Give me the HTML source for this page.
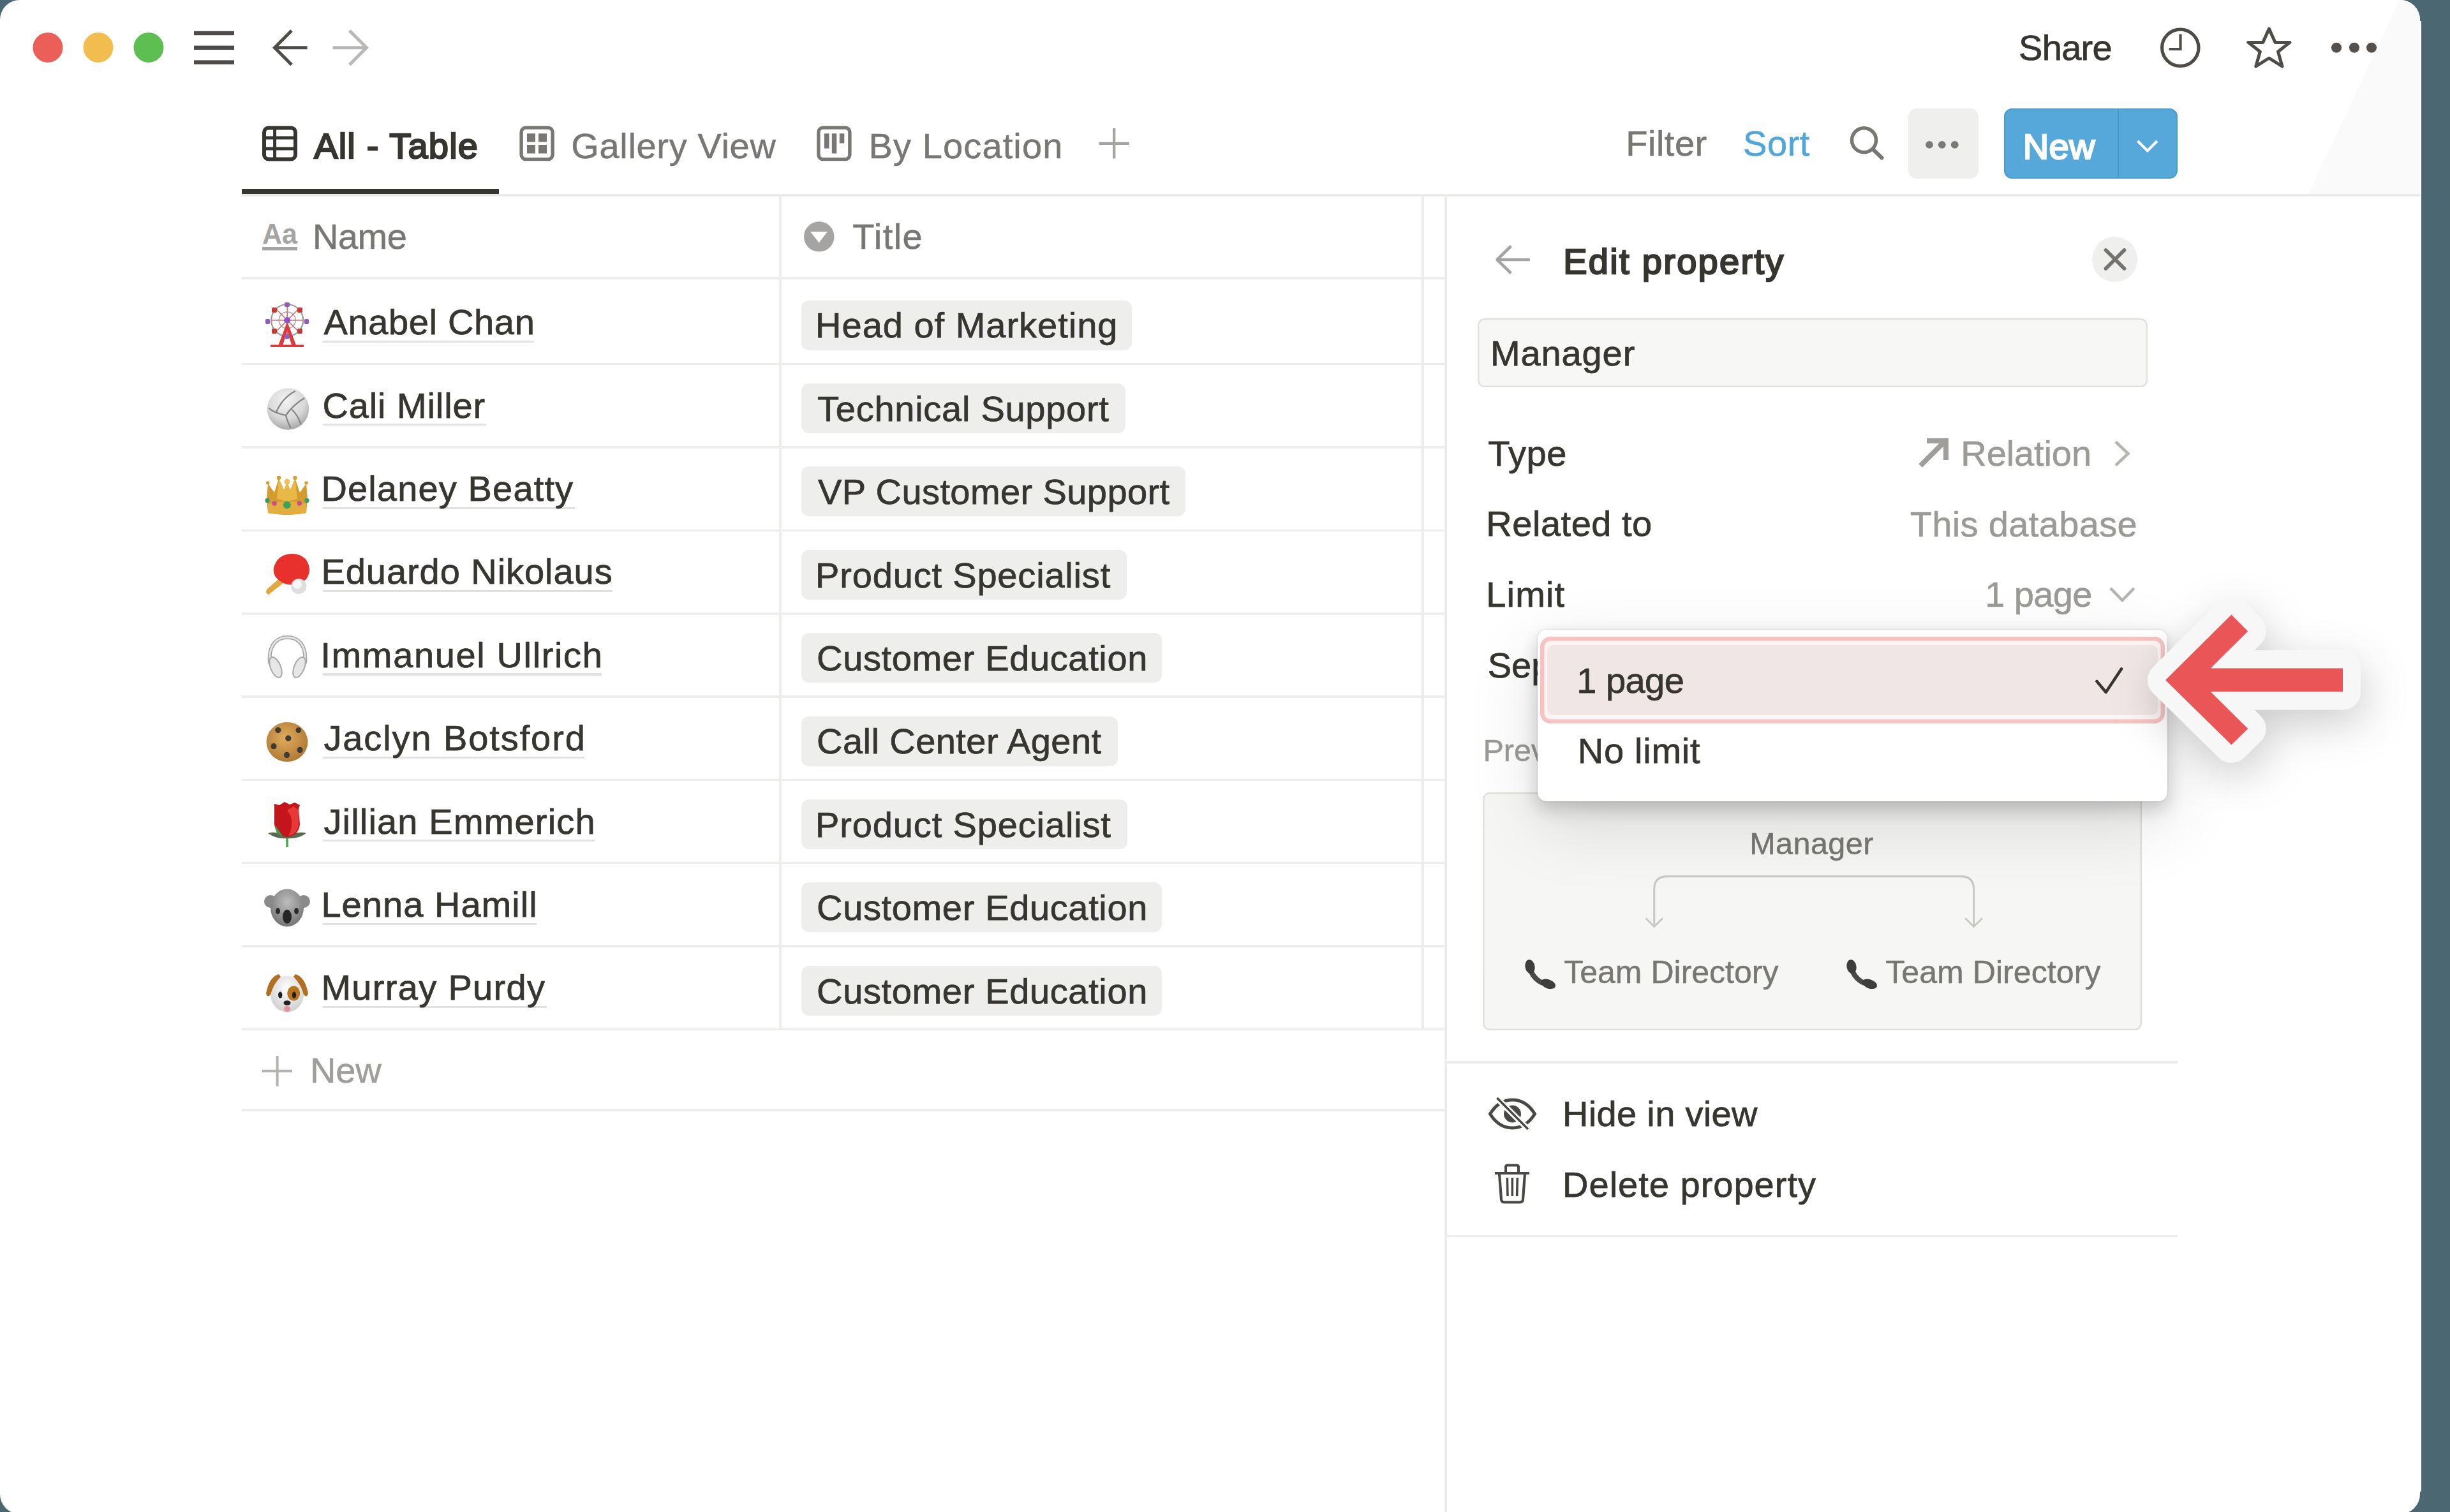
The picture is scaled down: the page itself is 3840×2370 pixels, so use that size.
<!DOCTYPE html>
<html><head><meta charset="utf-8"><style>
html,body{margin:0;padding:0;width:3840px;height:2370px;overflow:hidden;background:#4b6771;}
.win{position:absolute;left:0;top:0;width:3793px;height:2373px;border-radius:31px;background:#fff;overflow:hidden;}
.t{position:absolute;font-family:"Liberation Sans", sans-serif;line-height:1;white-space:pre;}
.r{position:absolute;}
.ov{position:absolute;left:0;top:0;overflow:visible;}
.wrap{position:absolute;left:0;top:0;width:3840px;height:2370px;}
</style></head><body>
<div class="r" style="left:3792.5px;top:33px;width:2.3px;height:2305px;background:#fff"></div><div class="win"><div class="wrap">
<svg class="ov" width="3840" height="400"><path d="M3761 0 H3800 V305 H3618 Z" fill="#fafafa"/></svg><div class="r" style="left:379.0px;top:296.0px;width:403.0px;height:8.0px;background:#37352f;"></div><div class="r" style="left:378.0px;top:304.2px;width:3422.0px;height:3.4px;background:#ebebea;"></div><div class="r" style="left:379.0px;top:434.3px;width:1887.0px;height:3.5px;background:#ededec;"></div><div class="r" style="left:379.0px;top:568.9px;width:1887.0px;height:3.5px;background:#ededec;"></div><div class="r" style="left:379.0px;top:699.2px;width:1887.0px;height:3.5px;background:#ededec;"></div><div class="r" style="left:379.0px;top:829.6px;width:1887.0px;height:3.5px;background:#ededec;"></div><div class="r" style="left:379.0px;top:960.2px;width:1887.0px;height:3.5px;background:#ededec;"></div><div class="r" style="left:379.0px;top:1090.2px;width:1887.0px;height:3.5px;background:#ededec;"></div><div class="r" style="left:379.0px;top:1220.8px;width:1887.0px;height:3.5px;background:#ededec;"></div><div class="r" style="left:379.0px;top:1350.8px;width:1887.0px;height:3.5px;background:#ededec;"></div><div class="r" style="left:379.0px;top:1481.2px;width:1887.0px;height:3.5px;background:#ededec;"></div><div class="r" style="left:379.0px;top:1611.8px;width:1887.0px;height:3.5px;background:#ededec;"></div><div class="r" style="left:379.0px;top:1738.2px;width:1887.0px;height:3.5px;background:#ededec;"></div><div class="r" style="left:1221.0px;top:307.0px;width:3.5px;height:1306.6px;background:#ededec;"></div><div class="r" style="left:2228.2px;top:307.0px;width:3.5px;height:1306.6px;background:#ededec;"></div><div class="r" style="left:2264.0px;top:307.0px;width:3.6px;height:2093.0px;background:#ededec;"></div><div class="r" style="left:2268.0px;top:1663.4px;width:1145.0px;height:3.2px;background:#ededec;"></div><div class="r" style="left:2268.0px;top:1935.6px;width:1145.0px;height:3.2px;background:#ededec;"></div><div class="r" style="left:506.0px;top:533.7px;width:331.3px;height:3.4px;background:#e3e2e0;"></div><div class="r" style="left:506.0px;top:664.1px;width:256.2px;height:3.4px;background:#e3e2e0;"></div><div class="r" style="left:506.0px;top:794.5px;width:394.8px;height:3.4px;background:#e3e2e0;"></div><div class="r" style="left:506.0px;top:924.9px;width:454.3px;height:3.4px;background:#e3e2e0;"></div><div class="r" style="left:506.0px;top:1055.3px;width:437.3px;height:3.4px;background:#e3e2e0;"></div><div class="r" style="left:506.0px;top:1185.7px;width:410.3px;height:3.4px;background:#e3e2e0;"></div><div class="r" style="left:506.0px;top:1316.1px;width:426.1px;height:3.4px;background:#e3e2e0;"></div><div class="r" style="left:506.0px;top:1446.5px;width:334.9px;height:3.4px;background:#e3e2e0;"></div><div class="r" style="left:506.0px;top:1576.9px;width:350.7px;height:3.4px;background:#e3e2e0;"></div><div class="r" style="left:1256.0px;top:470.5px;width:518.0px;height:78.2px;background:#eeeeed;border-radius:12px"></div><div class="r" style="left:1256.0px;top:600.9px;width:508.1px;height:78.2px;background:#eeeeed;border-radius:12px"></div><div class="r" style="left:1256.0px;top:731.3px;width:602.3px;height:78.2px;background:#eeeeed;border-radius:12px"></div><div class="r" style="left:1256.0px;top:861.7px;width:510.3px;height:78.2px;background:#eeeeed;border-radius:12px"></div><div class="r" style="left:1256.0px;top:992.1px;width:564.8px;height:78.2px;background:#eeeeed;border-radius:12px"></div><div class="r" style="left:1256.0px;top:1122.5px;width:496.2px;height:78.2px;background:#eeeeed;border-radius:12px"></div><div class="r" style="left:1256.0px;top:1252.9px;width:511.0px;height:78.2px;background:#eeeeed;border-radius:12px"></div><div class="r" style="left:1256.0px;top:1383.3px;width:564.8px;height:78.2px;background:#eeeeed;border-radius:12px"></div><div class="r" style="left:1256.0px;top:1513.7px;width:564.8px;height:78.2px;background:#eeeeed;border-radius:12px"></div><div class="r" style="left:2990.8px;top:169.9px;width:109.9px;height:110.1px;background:#efefee;border-radius:13px"></div><div class="r" style="left:3141.0px;top:170.0px;width:271.8px;height:110.0px;background:#55a8d9;border-radius:13px;box-shadow:inset 0 0 0 2px #4b9cce"></div><div class="r" style="left:3318.8px;top:170.0px;width:2.4px;height:110.0px;background:#4a97c6;"></div><div class="r" style="left:2316.0px;top:498.6px;width:1049.6px;height:108.9px;background:#f7f7f5;border-radius:11px;box-shadow:inset 0 0 0 2.5px #e2e1de"></div><div class="r" style="left:3279.2px;top:371.4px;width:70.6px;height:70.6px;background:#efefee;border-radius:50%"></div><div class="r" style="left:2324.0px;top:1242.0px;width:1033.0px;height:372.5px;background:#f6f6f4;border-radius:11px;box-shadow:inset 0 0 0 2.5px #e2e1de"></div>
<svg class="ov" width="3840" height="2370" viewBox="0 0 3840 2370"><circle cx="75" cy="74.5" r="23.5" fill="#ec5f59"/><circle cx="154" cy="74.5" r="23.5" fill="#f2bd4e"/><circle cx="233" cy="74.5" r="23.5" fill="#5dbf52"/><rect x="304" y="48.8" width="63" height="6.4" fill="#4f4b47"/><rect x="304" y="71.6" width="63" height="6.4" fill="#4f4b47"/><rect x="304" y="94.39999999999999" width="63" height="6.4" fill="#4f4b47"/><path d="M481.6 74.7 H430 M457 48 L430.5 74.7 L457 101.4" stroke="#4f4b47" stroke-width="5" fill="none"/><path d="M521.6 74.7 H573 M547.8 48 L574.5 74.7 L547.8 101.4" stroke="#b9b8b6" stroke-width="5" fill="none"/><circle cx="3417.3" cy="74.8" r="28.7" stroke="#4f4b47" stroke-width="5.2" fill="none"/><path d="M3417.5 53.4 V77 H3399.7" stroke="#4f4b47" stroke-width="4.2" fill="none"/><path d="M3556.4 45 L3566 66.4 L3589 66.4 L3570.5 81 L3577 104 L3556.4 91 L3535.8 104 L3542.3 81 L3523.8 66.4 L3546.8 66.4 Z" stroke="#4f4b47" stroke-width="5" fill="none" stroke-linejoin="round"/><circle cx="3662" cy="74.7" r="8" fill="#55504b"/><circle cx="3690" cy="74.7" r="8" fill="#55504b"/><circle cx="3717" cy="74.7" r="8" fill="#55504b"/><rect x="414" y="200.4" width="49" height="49" rx="7" stroke="#37352f" stroke-width="6" fill="none"/><path d="M414 216 H463 M414 233 H463 M430.6 200.4 V249.4" stroke="#37352f" stroke-width="5" fill="none"/><rect x="817.1" y="200.1" width="49" height="49.5" rx="7" stroke="#787774" stroke-width="5.4" fill="none"/><rect x="826" y="209.3" width="13" height="13.3" fill="#787774"/><rect x="844" y="209.3" width="13" height="13.3" fill="#787774"/><rect x="826" y="227" width="13" height="13.5" fill="#787774"/><rect x="844" y="227" width="13" height="13.5" fill="#787774"/><rect x="1282.9" y="200.1" width="49" height="49.5" rx="7" stroke="#787774" stroke-width="5.4" fill="none"/><rect x="1292" y="209.3" width="7.6" height="23.3" fill="#787774"/><rect x="1303.8" y="209.3" width="7.5" height="31.2" fill="#787774"/><rect x="1315.8" y="209.3" width="7.5" height="15.2" fill="#787774"/><path d="M1746.2 201 V248.5 M1722.5 224.8 H1769.8" stroke="#a5a4a1" stroke-width="4.3" fill="none"/><circle cx="2921.5" cy="219.7" r="19" stroke="#787774" stroke-width="5.5" fill="none"/><path d="M2935 233.5 L2949.5 247.5" stroke="#787774" stroke-width="6" stroke-linecap="round"/><circle cx="3024" cy="226.8" r="5.9" fill="#7b7a77"/><circle cx="3043.8" cy="226.8" r="5.9" fill="#7b7a77"/><circle cx="3063.7" cy="226.8" r="5.9" fill="#7b7a77"/><path d="M3350.5 221 L3365.8 236.3 L3381 221" stroke="#fff" stroke-width="4.2" fill="none"/><text x="411" y="382.4" font-family="Liberation Sans" font-weight="700" font-size="45" fill="#a5a4a2" textLength="55" lengthAdjust="spacingAndGlyphs">Aa</text><rect x="411" y="387" width="55" height="5.4" fill="#a5a4a2"/><circle cx="1283.8" cy="370.9" r="23.7" fill="#a5a4a2"/><path d="M1270.4 363.3 H1296.8 L1283.6 380.4 Z" fill="#fff"/><path d="M434.6 1655 V1702.5 M411 1678.8 H458" stroke="#b4b3b0" stroke-width="4" fill="none"/><path d="M2396 407 H2348 M2367 387 L2346.5 407 L2367 427" stroke="#a5a4a2" stroke-width="4.6" fill="none" stroke-linecap="round" stroke-linejoin="round"/><path d="M3300.5 392 L3329.5 421 M3329.5 392 L3300.5 421" stroke="#73726e" stroke-width="5.8" fill="none" stroke-linecap="round"/><path d="M3010 730 L3048 692" stroke="#9f9e9b" stroke-width="8" fill="none"/><path d="M3020 687 H3054 V721 H3046 V695 H3020 Z" fill="#9f9e9b"/><path d="M3316 692.5 L3335.5 711 L3316 729.5" stroke="#b5b4b1" stroke-width="4.5" fill="none"/><path d="M3308 922 L3326.4 941 L3344.8 922" stroke="#b5b4b1" stroke-width="4.5" fill="none"/><path d="M2592.7 1450 V1394 Q2592.7 1373.8 2612.7 1373.8 H3073.6 Q3093.6 1373.8 3093.6 1394 V1450" stroke="#c8c7c4" stroke-width="3" fill="none"/><path d="M2579.4 1439.3 L2592.7 1452.5 L2606 1439.3 M3080.3 1439.3 L3093.6 1452.5 L3106.9 1439.3" stroke="#c8c7c4" stroke-width="3" fill="none"/><path d="M2335.5 1746 C2346 1729 2359 1724 2370.5 1724 C2382 1724 2395 1729 2405.5 1746 C2395 1763 2382 1768 2370.5 1768 C2359 1768 2346 1763 2335.5 1746 Z" stroke="#4a4845" stroke-width="5" fill="none"/><circle cx="2370.5" cy="1746" r="13.5" fill="#4a4845"/><path d="M2343 1718 L2398 1773" stroke="#fff" stroke-width="9"/><path d="M2346.4 1721 L2395 1770" stroke="#4a4845" stroke-width="3.5"/><path d="M2343 1839 H2397" stroke="#4a4845" stroke-width="4.2"/><path d="M2360 1838 V1829 Q2360 1826.5 2363 1826.5 H2377 Q2380 1826.5 2380 1829 V1838" stroke="#4a4845" stroke-width="4" fill="none"/><path d="M2350 1840 L2353 1880 Q2353.5 1884.5 2358 1884.5 H2382 Q2386.5 1884.5 2387 1880 L2390 1840" stroke="#4a4845" stroke-width="4.2" fill="none"/><path d="M2362.3 1846 L2363 1875 M2370.3 1846 V1875 M2378.3 1846 L2377.6 1875" stroke="#4a4845" stroke-width="3.6" fill="none"/></svg>
<div class="t" style="left:3164.1px;top:47.2px;font-size:56px;font-weight:400;color:#37352f;letter-spacing:-0.71px;-webkit-text-stroke:0.75px #37352f;">Share</div><div class="t" style="left:492.2px;top:201.0px;font-size:56px;font-weight:400;color:#37352f;letter-spacing:1.19px;-webkit-text-stroke:2.4px #37352f;">All - Table</div><div class="t" style="left:895.3px;top:201.4px;font-size:56px;font-weight:400;color:#787774;letter-spacing:0.66px;-webkit-text-stroke:0.55px #787774;">Gallery View</div><div class="t" style="left:1361.5px;top:201.2px;font-size:56px;font-weight:400;color:#787774;letter-spacing:1.12px;-webkit-text-stroke:0.55px #787774;">By Location</div><div class="t" style="left:2548.3px;top:197.4px;font-size:56px;font-weight:400;color:#787774;letter-spacing:0.49px;-webkit-text-stroke:0.55px #787774;">Filter</div><div class="t" style="left:2732.0px;top:197.4px;font-size:56px;font-weight:400;color:#4fa6da;letter-spacing:0.54px;-webkit-text-stroke:0.55px #4fa6da;">Sort</div><div class="t" style="left:3170.8px;top:201.5px;font-size:56px;font-weight:400;color:#ffffff;letter-spacing:0.36px;-webkit-text-stroke:2.4px #ffffff;">New</div><div class="t" style="left:490.0px;top:343.2px;font-size:56px;font-weight:400;color:#787774;letter-spacing:-0.49px;-webkit-text-stroke:0.55px #787774;">Name</div><div class="t" style="left:1336.3px;top:343.3px;font-size:56px;font-weight:400;color:#787774;letter-spacing:1.42px;-webkit-text-stroke:0.55px #787774;">Title</div><div class="t" style="left:507.4px;top:477.1px;font-size:56px;font-weight:400;color:#37352f;letter-spacing:0.66px;-webkit-text-stroke:0.75px #37352f;">Anabel Chan</div><div class="t" style="left:1278.1px;top:482.4px;font-size:56px;font-weight:400;color:#37352f;letter-spacing:0.99px;-webkit-text-stroke:0.75px #37352f;">Head of Marketing</div><div class="t" style="left:505.4px;top:607.5px;font-size:56px;font-weight:400;color:#37352f;letter-spacing:0.90px;-webkit-text-stroke:0.75px #37352f;">Cali Miller</div><div class="t" style="left:1281.1px;top:612.8px;font-size:56px;font-weight:400;color:#37352f;letter-spacing:0.73px;-webkit-text-stroke:0.75px #37352f;">Technical Support</div><div class="t" style="left:503.4px;top:737.9px;font-size:56px;font-weight:400;color:#37352f;letter-spacing:1.15px;-webkit-text-stroke:0.75px #37352f;">Delaney Beatty</div><div class="t" style="left:1282.1px;top:743.2px;font-size:56px;font-weight:400;color:#37352f;letter-spacing:0.41px;-webkit-text-stroke:0.75px #37352f;">VP Customer Support</div><div class="t" style="left:503.4px;top:868.3px;font-size:56px;font-weight:400;color:#37352f;letter-spacing:0.95px;-webkit-text-stroke:0.75px #37352f;">Eduardo Nikolaus</div><div class="t" style="left:1278.1px;top:873.6px;font-size:56px;font-weight:400;color:#37352f;letter-spacing:0.82px;-webkit-text-stroke:0.75px #37352f;">Product Specialist</div><div class="t" style="left:502.4px;top:998.7px;font-size:56px;font-weight:400;color:#37352f;letter-spacing:1.63px;-webkit-text-stroke:0.75px #37352f;">Immanuel Ullrich</div><div class="t" style="left:1280.1px;top:1004.0px;font-size:56px;font-weight:400;color:#37352f;letter-spacing:0.64px;-webkit-text-stroke:0.75px #37352f;">Customer Education</div><div class="t" style="left:507.4px;top:1129.1px;font-size:56px;font-weight:400;color:#37352f;letter-spacing:1.90px;-webkit-text-stroke:0.75px #37352f;">Jaclyn Botsford</div><div class="t" style="left:1280.1px;top:1134.4px;font-size:56px;font-weight:400;color:#37352f;letter-spacing:0.44px;-webkit-text-stroke:0.75px #37352f;">Call Center Agent</div><div class="t" style="left:507.4px;top:1259.5px;font-size:56px;font-weight:400;color:#37352f;letter-spacing:1.17px;-webkit-text-stroke:0.75px #37352f;">Jillian Emmerich</div><div class="t" style="left:1278.1px;top:1264.8px;font-size:56px;font-weight:400;color:#37352f;letter-spacing:0.86px;-webkit-text-stroke:0.75px #37352f;">Product Specialist</div><div class="t" style="left:503.4px;top:1389.9px;font-size:56px;font-weight:400;color:#37352f;letter-spacing:1.04px;-webkit-text-stroke:0.75px #37352f;">Lenna Hamill</div><div class="t" style="left:1280.1px;top:1395.2px;font-size:56px;font-weight:400;color:#37352f;letter-spacing:0.64px;-webkit-text-stroke:0.75px #37352f;">Customer Education</div><div class="t" style="left:503.4px;top:1520.3px;font-size:56px;font-weight:400;color:#37352f;letter-spacing:1.32px;-webkit-text-stroke:0.75px #37352f;">Murray Purdy</div><div class="t" style="left:1280.1px;top:1525.6px;font-size:56px;font-weight:400;color:#37352f;letter-spacing:0.64px;-webkit-text-stroke:0.75px #37352f;">Customer Education</div><div class="t" style="left:486.0px;top:1649.8px;font-size:56px;font-weight:400;color:#9f9e9b;letter-spacing:-0.22px;-webkit-text-stroke:0.55px #9f9e9b;">New</div><div class="t" style="left:2450.2px;top:382.4px;font-size:56px;font-weight:400;color:#37352f;letter-spacing:2.30px;-webkit-text-stroke:2.4px #37352f;">Edit property</div><div class="t" style="left:2335.9px;top:525.6px;font-size:56px;font-weight:400;color:#37352f;letter-spacing:0.90px;-webkit-text-stroke:0.75px #37352f;">Manager</div><div class="t" style="left:2332.3px;top:683.3px;font-size:56px;font-weight:400;color:#37352f;letter-spacing:0.56px;-webkit-text-stroke:0.75px #37352f;">Type</div><div class="t" style="left:3073.3px;top:682.9px;font-size:56px;font-weight:400;color:#9b9a97;letter-spacing:-0.10px;-webkit-text-stroke:0.55px #9b9a97;">Relation</div><div class="t" style="left:2329.3px;top:793.3px;font-size:56px;font-weight:400;color:#37352f;letter-spacing:0.52px;-webkit-text-stroke:0.75px #37352f;">Related to</div><div class="t" style="left:2993.7px;top:793.6px;font-size:56px;font-weight:400;color:#9b9a97;letter-spacing:0.35px;-webkit-text-stroke:0.55px #9b9a97;">This database</div><div class="t" style="left:2329.3px;top:903.6px;font-size:56px;font-weight:400;color:#37352f;letter-spacing:1.14px;-webkit-text-stroke:0.75px #37352f;">Limit</div><div class="t" style="left:3111.3px;top:904.1px;font-size:56px;font-weight:400;color:#9b9a97;letter-spacing:-0.66px;-webkit-text-stroke:0.55px #9b9a97;">1 page</div><div class="t" style="left:2331.7px;top:1014.9px;font-size:56px;font-weight:400;color:#37352f;letter-spacing:0.00px;-webkit-text-stroke:0.75px #37352f;">Separate</div><div class="t" style="left:2324.4px;top:1151.6px;font-size:48.5px;font-weight:400;color:#9b9a97;letter-spacing:0.00px;-webkit-text-stroke:0.5px #9b9a97;">Preview</div><div class="t" style="left:2742.2px;top:1298.0px;font-size:48.5px;font-weight:400;color:#787774;letter-spacing:0.46px;-webkit-text-stroke:0.5px #787774;">Manager</div><div class="t" style="left:2451.2px;top:1498.5px;font-size:50px;font-weight:400;color:#787774;letter-spacing:0.01px;-webkit-text-stroke:0.5px #787774;">Team Directory</div><div class="t" style="left:2955.2px;top:1498.6px;font-size:50px;font-weight:400;color:#787774;letter-spacing:0.08px;-webkit-text-stroke:0.5px #787774;">Team Directory</div><div class="t" style="left:2449.1px;top:1718.1px;font-size:56px;font-weight:400;color:#37352f;letter-spacing:0.31px;-webkit-text-stroke:0.75px #37352f;">Hide in view</div><div class="t" style="left:2449.1px;top:1828.5px;font-size:56px;font-weight:400;color:#37352f;letter-spacing:1.00px;-webkit-text-stroke:0.75px #37352f;">Delete property</div>
<svg class="ov" style="left:416px;top:474px" width="68" height="70" viewBox="0 0 68 70"><circle cx="34.2" cy="28" r="25" stroke="#9a9a9a" stroke-width="2.2" fill="none"/><circle cx="34.2" cy="28" r="13" stroke="#a8a8a8" stroke-width="1.6" fill="none"/><path d="M9 28 H59 M34.2 3 V53 M16.5 10.3 L51.9 45.7 M51.9 10.3 L16.5 45.7" stroke="#e46a6a" stroke-width="1.6"/><path d="M34.2 30 L20 68 H27 L34.2 44 L41.4 68 H48.4 Z" fill="#dc3b3b"/><rect x="8" y="66.5" width="52" height="3.5" fill="#dc3b3b"/><circle cx="34.2" cy="28" r="5" fill="#9050c8"/><g fill="#c23a30"><rect x="10" y="8" width="8" height="8" rx="2"/><rect x="50" y="8" width="8" height="8" rx="2"/><rect x="10" y="41" width="8" height="8" rx="2"/><rect x="50" y="41" width="8" height="8" rx="2"/></g><g fill="#8f5cc0"><rect x="30" y="0" width="8" height="7" rx="2"/><rect x="0" y="26" width="7" height="8" rx="2"/><rect x="61" y="26" width="7" height="8" rx="2"/><rect x="30" y="50" width="8" height="7" rx="2"/></g></svg><svg class="ov" style="left:417px;top:607px" width="68" height="70" viewBox="0 0 68 70"><defs><radialGradient id="vb" cx="45%" cy="30%" r="75%"><stop offset="0" stop-color="#f2f2f2"/><stop offset="0.6" stop-color="#d8d8d8"/><stop offset="1" stop-color="#9e9e9e"/></radialGradient></defs><circle cx="34.5" cy="34" r="32.7" fill="url(#vb)"/><path d="M46 6 Q26 16 16 39 M4.6 32.7 Q10 39 31 44 M31 44 Q42 28 60 17 M31 44 Q34 56 39 64 M40.6 35 Q50 44 55 59" stroke="#858585" stroke-width="2.3" fill="none"/></svg><svg class="ov" style="left:416px;top:742px" width="68" height="70" viewBox="0 0 68 70"><path d="M2 40 L4 16 L14 30 L21 8 L29 26 L34 14 L39 26 L46.5 8 L54 30 L64 16 L66 40 L64 62 Q34 68 4 62 Z" fill="#d49b2e"/><path d="M21 8 L29 26 L34 14 L39 26 L46.5 8 L50 40 L34 44 L18 40 Z" fill="#e9b846"/><path d="M4 48 Q34 40 64 48 L64 62 Q34 68 4 62 Z" fill="#e4ae3e"/><circle cx="21" cy="7" r="3.2" fill="#d8a030"/><circle cx="46.5" cy="7" r="3.2" fill="#d8a030"/><circle cx="34" cy="13" r="4.5" fill="#f0c25a"/><circle cx="3.7" cy="15" r="2.8" fill="#d8a030"/><circle cx="64" cy="15" r="2.8" fill="#d8a030"/><circle cx="33.8" cy="49.4" r="6" fill="#3da35a"/><circle cx="14" cy="47" r="3.8" fill="#c8508c"/><circle cx="53.4" cy="47" r="3.8" fill="#c8508c"/><circle cx="3" cy="42.4" r="3.6" fill="#3a9c6c"/><circle cx="65" cy="42.4" r="3.6" fill="#3a9c6c"/></svg><svg class="ov" style="left:415px;top:866px" width="72" height="70" viewBox="0 0 72 70"><path d="M28 36 L3 58 Q0 64 6 66 L34 44 Z" fill="#e2a840"/><path d="M14 24 Q20 2 44 2 Q68 4 70 26 Q70 46 48 50 Q34 52 26 46 Q12 38 14 24 Z" fill="#e8302c"/><circle cx="53.3" cy="53" r="12" fill="#dedede"/><circle cx="51" cy="50" r="7" fill="#f6f6f6"/></svg><svg class="ov" style="left:416px;top:996px" width="68" height="70" viewBox="0 0 68 70"><path d="M7 44 C4 12 20 3 34.5 3 C49 3 65 12 62 44" stroke="#a4a4a4" stroke-width="6" fill="none"/><path d="M7 44 C4 12 20 3 34.5 3 C49 3 65 12 62 44" stroke="#e2e2e2" stroke-width="3" fill="none"/><ellipse cx="16" cy="50" rx="8" ry="17" transform="rotate(-22 16 50)" fill="#e6e6e6" stroke="#a8a8a8" stroke-width="2"/><ellipse cx="53" cy="50" rx="8" ry="17" transform="rotate(22 53 50)" fill="#e6e6e6" stroke="#a8a8a8" stroke-width="2"/></svg><svg class="ov" style="left:416px;top:1129px" width="68" height="70" viewBox="0 0 68 70"><defs><radialGradient id="ck" cx="45%" cy="40%" r="60%"><stop offset="0" stop-color="#e0ab5e"/><stop offset="1" stop-color="#b27a34"/></radialGradient></defs><ellipse cx="34" cy="34" rx="32.5" ry="31" fill="url(#ck)"/><g fill="#3e3a36"><circle cx="19.8" cy="15.6" r="4.6"/><circle cx="51.8" cy="15.6" r="4.3"/><circle cx="35.8" cy="28.2" r="4.6"/><circle cx="13" cy="40.7" r="4.6"/><circle cx="54" cy="46.4" r="4.6"/><circle cx="33.5" cy="54.4" r="4.6"/></g></svg><svg class="ov" style="left:416px;top:1256px" width="68" height="74" viewBox="0 0 68 74"><path d="M34 52 V72" stroke="#4aa64a" stroke-width="3.5"/><path d="M34 56 Q18 46 4 50 Q18 60 34 58 Z M34 56 Q50 46 64 50 Q50 60 34 58 Z" fill="#5a6a50"/><path d="M14 4 L22 6 L30 1 L38 5 L46 2 L54 6 L52 12 L54 36 Q52 54 34 56 Q16 54 14 36 L14 14 Z" fill="#c4141c"/><path d="M34 14 L44 8 L52 14 L52 36 Q50 52 36 54 Q44 40 40 24 Z" fill="#e83838"/><path d="M14 36 L18 50 L28 56 L20 44 Z" fill="#3d9b48"/></svg><svg class="ov" style="left:416px;top:1389px" width="68" height="70" viewBox="0 0 68 70"><defs><radialGradient id="ko" cx="50%" cy="35%" r="60%"><stop offset="0" stop-color="#bdbdbd"/><stop offset="1" stop-color="#7a7a7a"/></radialGradient></defs><circle cx="8" cy="24" r="10" fill="#8a8a8a"/><circle cx="60" cy="24" r="10" fill="#8a8a8a"/><ellipse cx="34" cy="34" rx="26" ry="29.5" fill="url(#ko)"/><ellipse cx="34" cy="47.7" rx="7" ry="11" fill="#262626"/><ellipse cx="19.5" cy="39" rx="3.5" ry="5" fill="#2a2a2a"/><ellipse cx="48.6" cy="39" rx="3.5" ry="5" fill="#2a2a2a"/></svg><svg class="ov" style="left:416px;top:1523px" width="68" height="70" viewBox="0 0 68 70"><defs><radialGradient id="dg" cx="50%" cy="35%" r="65%"><stop offset="0" stop-color="#ffffff"/><stop offset="1" stop-color="#cfcfcf"/></radialGradient></defs><ellipse cx="34" cy="35" rx="26" ry="28.5" fill="url(#dg)"/><path d="M21 4 Q6 8 1 34 Q3 42 8 36 Q12 20 24 8 Z" fill="#b26f22"/><path d="M47 4 Q62 8 67 34 Q65 42 60 36 Q56 20 44 8 Z" fill="#b26f22"/><ellipse cx="44.2" cy="34" rx="10" ry="11.5" fill="#b8741f"/><ellipse cx="23.2" cy="36.6" rx="3.2" ry="5" fill="#222"/><ellipse cx="45" cy="36.6" rx="3.2" ry="5" fill="#222"/><ellipse cx="34" cy="49" rx="5.5" ry="3.8" fill="#222"/><ellipse cx="34" cy="58.4" rx="5" ry="4.5" fill="#e8909a"/></svg><svg class="ov" style="left:2380px;top:1495px" width="70" height="65" viewBox="0 0 70 65"><path d="M18 24 Q24 40 38 46" stroke="#4a4a4a" stroke-width="8" fill="none"/><ellipse cx="18" cy="20.2" rx="7.5" ry="11" transform="rotate(-10 18 20.2)" fill="#3e3e3e"/><ellipse cx="46.4" cy="47.3" rx="12" ry="7" transform="rotate(20 46.4 47.3)" fill="#3e3e3e"/></svg><svg class="ov" style="left:2884.3px;top:1495px" width="70" height="65" viewBox="0 0 70 65"><path d="M18 24 Q24 40 38 46" stroke="#4a4a4a" stroke-width="8" fill="none"/><ellipse cx="18" cy="20.2" rx="7.5" ry="11" transform="rotate(-10 18 20.2)" fill="#3e3e3e"/><ellipse cx="46.4" cy="47.3" rx="12" ry="7" transform="rotate(20 46.4 47.3)" fill="#3e3e3e"/></svg>
<div class="r" style="left:2410.0px;top:986.9px;width:987.4px;height:268.9px;background:#fff;border-radius:14px;box-shadow:0 0 0 1.5px rgba(15,15,15,0.06),0 12px 28px rgba(15,15,15,0.20),0 36px 110px rgba(15,15,15,0.13)"></div><div class="r" style="left:2414.0px;top:997.5px;width:979.0px;height:136.0px;background:#fdf4f4;border-radius:16px;box-shadow:inset 0 0 0 6.5px #f6c2c2"></div><div class="r" style="left:2425.3px;top:1010.8px;width:956.3px;height:110.7px;background:#efe6e5;border-radius:10px"></div>
<div class="t" style="left:2471.3px;top:1038.6px;font-size:56px;font-weight:400;color:#37352f;letter-spacing:-0.56px;-webkit-text-stroke:0.75px #37352f;">1 page</div><div class="t" style="left:2472.7px;top:1148.8px;font-size:56px;font-weight:400;color:#37352f;letter-spacing:0.75px;-webkit-text-stroke:0.75px #37352f;">No limit</div>
<svg class="ov" width="3840" height="2370" viewBox="0 0 3840 2370"><defs><filter id="ash" x="-50%" y="-50%" width="200%" height="200%"><feDropShadow dx="6" dy="22" stdDeviation="34" flood-color="#000" flood-opacity="0.2"/></filter></defs><path d="M3286.5 1068 L3300.7 1085 L3325 1048.5" stroke="#37352f" stroke-width="4.6" fill="none" stroke-linecap="round" stroke-linejoin="round"/><g filter="url(#ash)"><path d="M3394 1066 L3497.4 963.6 L3523.3 989.5 L3464.8 1047.5 L3672 1047.5 L3672 1084.3 L3464.8 1084.3 L3523.3 1142.3 L3497.4 1167.5 Z" fill="#f7f7f7" stroke="#f7f7f7" stroke-width="56" stroke-linejoin="round"/></g><path d="M3394 1066 L3497.4 963.6 L3523.3 989.5 L3464.8 1047.5 L3672 1047.5 L3672 1084.3 L3464.8 1084.3 L3523.3 1142.3 L3497.4 1167.5 Z" fill="#ea5657"/></svg>
</div></div>
</body></html>
